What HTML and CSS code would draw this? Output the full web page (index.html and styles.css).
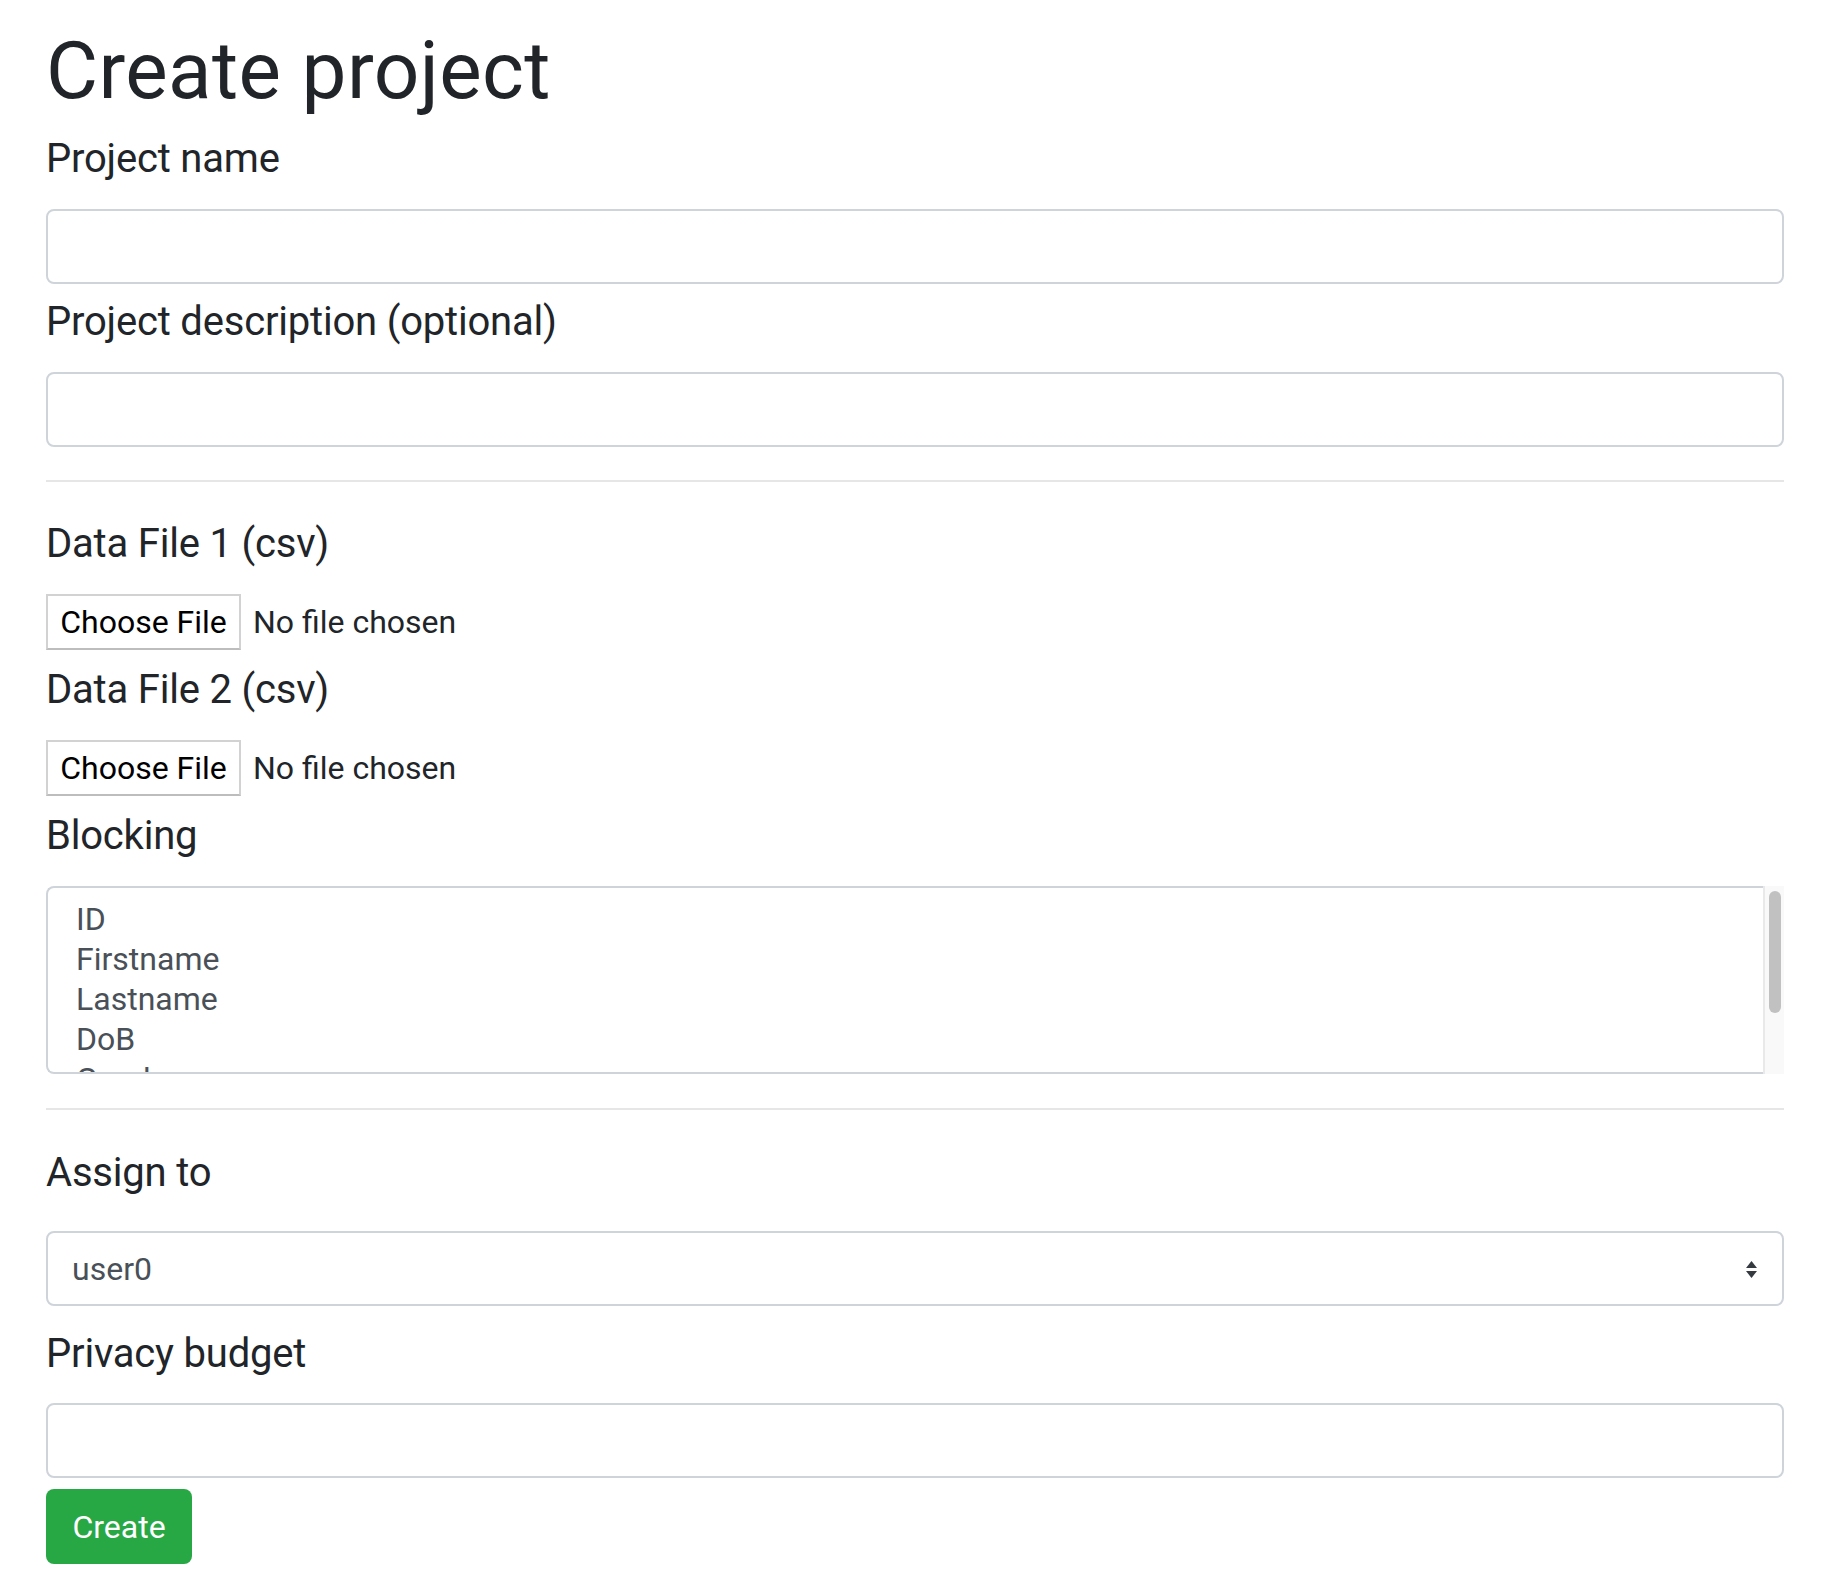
FILE: index.html
```html
<!DOCTYPE html>
<html lang="en">
<head>
<meta charset="utf-8">
<title>Create project</title>
<link rel="stylesheet" href="styles.css">
</head>
<body>
<main class="page">
  <h1 class="title">Create project</h1>
  <form class="form">
    <label class="field-label" for="name">Project name</label>
    <input class="control" id="name" type="text">

    <label class="field-label" for="desc">Project description (optional)</label>
    <input class="control" id="desc" type="text">

    <hr class="divider divider-top">

    <label class="field-label">Data File 1 (csv)</label>
    <div class="file-row">
      <span class="file-btn">Choose File</span>
      <span class="file-status">No file chosen</span>
    </div>

    <label class="field-label">Data File 2 (csv)</label>
    <div class="file-row">
      <span class="file-btn">Choose File</span>
      <span class="file-status">No file chosen</span>
    </div>

    <label class="field-label">Blocking</label>
    <div class="listbox" role="listbox" aria-multiselectable="true">
      <div class="listbox-options">
        <div class="listbox-option" role="option">ID</div>
        <div class="listbox-option" role="option">Firstname</div>
        <div class="listbox-option" role="option">Lastname</div>
        <div class="listbox-option" role="option">DoB</div>
        <div class="listbox-option" role="option">Gender</div>
        <div class="listbox-option" role="option">Postcode</div>
      </div>
      <div class="listbox-scrollbar" aria-hidden="true">
        <div class="listbox-thumb"></div>
      </div>
    </div>

    <hr class="divider divider-bottom">

    <label class="field-label field-label-wide" for="assign">Assign to</label>
    <div class="select-wrap">
      <select class="control select" id="assign">
        <option>user0</option>
      </select>
      <svg class="select-arrows" width="11" height="17" viewBox="0 0 11 17" aria-hidden="true">
        <path d="M0 7 L5.5 0 L11 7 Z" fill="#343a40"/>
        <path d="M0 10 L11 10 L5.5 17 Z" fill="#343a40"/>
      </svg>
    </div>

    <label class="field-label field-label-tight" for="budget">Privacy budget</label>
    <input class="control control-last" id="budget" type="text">

    <button class="btn-create" type="button">Create</button>
  </form>
</main>
</body>
</html>
```

FILE: styles.css
```css
* {
  box-sizing: border-box;
}

body {
  margin: 0;
  background: #ffffff;
  font-family: Roboto, "Liberation Sans", Arial, sans-serif;
  color: #212529;
}

.page {
  padding: 23px 46px 0 46px;
}

.title {
  margin: 0 0 14px 0;
  font-size: 80px;
  line-height: 96px;
  font-weight: 400;
  letter-spacing: 0.4px;
  color: #212529;
}

.form {
  display: flex;
  flex-direction: column;
}

.field-label {
  display: block;
  padding-top: 2px;
  font-size: 40px;
  line-height: 48px;
  letter-spacing: -0.2px;
  margin-bottom: 26px;
  color: #212529;
}

.field-label-wide {
  padding-top: 5px;
  margin-bottom: 34px;
}

.field-label-tight {
  margin-bottom: 25px;
}

.control {
  display: block;
  width: 100%;
  height: 75px;
  margin: 0 0 12px 0;
  padding: 0 24px;
  border: 2px solid #ced4da;
  border-radius: 8px;
  background: #ffffff;
  font-family: Roboto, "Liberation Sans", Arial, sans-serif;
  font-size: 32px;
  color: #495057;
  outline: none;
}

.control-last {
  margin-bottom: 11px;
}

.divider {
  height: 0;
  border: 0;
  border-top: 2px solid #e6e6e6;
  width: 100%;
}

.divider-top {
  margin: 21px 0 36px 0;
}

.divider-bottom {
  margin: 34px 0 34px 0;
}

.file-row {
  display: flex;
  align-items: center;
  height: 56px;
  margin-bottom: 14px;
}

.file-btn {
  display: flex;
  align-items: center;
  justify-content: center;
  width: 195px;
  height: 56px;
  border: 2px solid #d2d2d2;
  border-bottom-color: #bdbdbd;
  background: #ffffff;
  font-size: 32px;
  color: #000000;
}

.file-status {
  margin-left: 12px;
  font-size: 32px;
  color: #212529;
}

.listbox {
  display: flex;
  height: 188px;
  background: #ffffff;
}

.listbox-options {
  flex: 1;
  min-width: 0;
  padding: 11px 24px 0 24px;
  border: 2px solid #ced4da;
  border-right: 0;
  border-radius: 8px 0 0 8px;
  overflow: hidden;
  font-size: 32px;
  color: #495057;
}

.listbox-option {
  padding: 0 4px;
  line-height: 40px;
  white-space: nowrap;
}

.listbox-scrollbar {
  width: 21px;
  flex: none;
  padding: 5px 3px 0 4px;
  background: #f9f9f9;
  border-left: 2px solid #e9e9e9;
}

.listbox-thumb {
  width: 12px;
  height: 122px;
  border-radius: 6px;
  background: #c1c1c1;
}

.select-wrap {
  position: relative;
  margin-bottom: 22px;
}

.select {
  -webkit-appearance: none;
  appearance: none;
  margin: 0;
  cursor: default;
}

.select-arrows {
  position: absolute;
  right: 27px;
  top: 30px;
  pointer-events: none;
}

.btn-create {
  align-self: flex-start;
  width: 146px;
  height: 75px;
  padding: 0 24px;
  border: 0;
  border-radius: 8px;
  background: #28a745;
  color: #ffffff;
  font-family: Roboto, "Liberation Sans", Arial, sans-serif;
  font-size: 32px;
  cursor: pointer;
}
```
